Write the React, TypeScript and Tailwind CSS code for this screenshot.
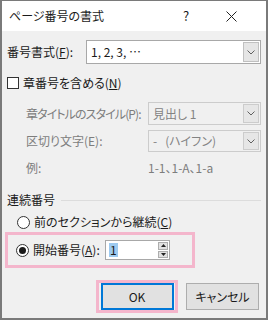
import type { ReactNode } from "react";

const FONT = "font-['Yu_Gothic_UI','Meiryo_UI','Noto_Sans_CJK_JP',sans-serif] [font-feature-settings:'palt']";

function Chevron() {
  return (
    <svg width="8" height="5" viewBox="0 0 8 5" fill="none" stroke="#606060" strokeWidth="1">
      <path d="M0.5 0.5 L4 4 L7.5 0.5" />
    </svg>
  );
}

function Combo({ value, disabled, className }: { value: ReactNode; disabled?: boolean; className?: string }) {
  return (
    <div
      className={`flex h-full items-stretch border ${disabled ? "border-[#cccccc] bg-[#f0f0f0] text-[#838383]" : "border-[#a8a8a8] bg-white text-[#1a1a1a]"} ${className ?? ""}`}
    >
      <div className="flex flex-1 items-center whitespace-nowrap pl-[4px] text-[12px]">{value}</div>
      <div className={`m-px flex w-[16px] items-center justify-center border ${disabled ? "border-[#cccccc] bg-[#e6e6e6]" : "border-[#c0c0c0] bg-[#e5e5e5]"}`}>
        <Chevron />
      </div>
    </div>
  );
}

function Radio({ checked }: { checked?: boolean }) {
  return (
    <span className="flex h-[13px] w-[13px] shrink-0 items-center justify-center rounded-full border border-[#333333] bg-white">
      {checked ? <span className="h-[7px] w-[7px] rounded-full bg-[#1a1a1a]" /> : null}
    </span>
  );
}

export default function App() {
  return (
    <div className={`${FONT} flex h-[320px] w-[268px] flex-col border-x-2 border-b-2 border-t border-[#7a7a7a] bg-[#f0f0f0] text-[12px] text-[#1a1a1a]`}>
      <div className="flex h-[30px] items-center bg-white pl-[7px]">
        <span className="flex-1 text-[12px]">ページ番号の書式</span>
        <span className="w-[20px] text-center text-[13px]">?</span>
        <span className="flex w-[70px] items-center justify-center">
          <svg width="11" height="11" viewBox="0 0 11 11" stroke="#222" strokeWidth="1">
            <path d="M0.5 0.5 L10.5 10.5 M10.5 0.5 L0.5 10.5" />
          </svg>
        </span>
      </div>

      <div className="flex flex-col px-[5px] whitespace-nowrap">
        <div className="mt-[9px] flex h-[24px] items-center">
          <span className="w-[79px] shrink-0">
            番号書式(<span className="underline">F</span>):
          </span>
          <Combo value="1, 2, 3, …" className="flex-1" />
        </div>

        <div className="mt-[7px] flex h-[24px] items-center gap-[4px]">
          <span className="h-[12px] w-[12px] border border-[#333333] bg-white" />
          <span>
            章番号を含める(<span className="underline">N</span>)
          </span>
        </div>

        <div className="mt-[7px] flex h-[23px] items-center">
          <span className="w-[141px] shrink-0 overflow-hidden pl-[19px] tracking-[-0.9px] text-[#7d7d7d]">章タイトルのスタイル(P):</span>
          <Combo value="見出し 1" disabled className="flex-1" />
        </div>

        <div className="mt-[5px] flex h-[22px] items-center">
          <span className="w-[141px] shrink-0 pl-[19px] text-[#7d7d7d]">区切り文字(E):</span>
          <Combo value={<span>-&nbsp;&nbsp;&nbsp;(ハイフン)</span>} disabled className="flex-1" />
        </div>

        <div className="mt-[6px] flex h-[20px] items-center text-[#7d7d7d]">
          <span className="w-[141px] shrink-0 pl-[19px]">例:</span>
          <span>1-1、1-A、1-a</span>
        </div>

        <div className="mt-[12px] flex h-[20px] items-center gap-[6px]">
          <span>連続番号</span>
          <span className="h-px flex-1 bg-[#dcdcdc]" />
        </div>

        <div className="mt-[2px] flex h-[20px] items-center gap-[4px] pl-[10px]">
          <Radio />
          <span>
            前のセクションから継続(<span className="underline">C</span>)
          </span>
        </div>

        <div className="-ml-[2px] flex h-[36px] w-[190px] items-center border-[3px] border-[#f4b6cc] pl-[8px]">
          <Radio checked />
          <span className="ml-[4px] w-[72px]">
            開始番号(<span className="underline">A</span>):
          </span>
          <div className="flex h-[20px] w-[65px] items-stretch border border-[#a8a8a8] bg-white">
            <div className="flex flex-1 items-center pl-[3px]">
              <span className="bg-[#9dcaf0] px-px leading-[14px]">1</span>
            </div>
            <div className="flex w-[12px] flex-col gap-px p-px">
              <span className="flex flex-1 items-center justify-center border border-[#adadad] bg-[#e1e1e1]">
                <svg width="5" height="3" viewBox="0 0 5 3"><path d="M2.5 0 L5 3 L0 3 Z" fill="#222" /></svg>
              </span>
              <span className="flex flex-1 items-center justify-center border border-[#adadad] bg-[#e1e1e1]">
                <svg width="5" height="3" viewBox="0 0 5 3"><path d="M0 0 L5 0 L2.5 3 Z" fill="#222" /></svg>
              </span>
            </div>
          </div>
        </div>

        <div className="mt-[12px] flex h-[33px] items-center">
          <div className="ml-[89px] flex h-[33px] w-[82px] items-center justify-center border-[3px] border-[#f4b6cc]">
            <button className="flex h-[27px] w-[73px] items-center justify-center border-2 border-[#0078d7] bg-[#e1e1e1] text-[12px]">OK</button>
          </div>
          <button className="ml-[8px] flex h-[27px] w-[73px] items-center justify-center border border-[#adadad] bg-[#e1e1e1] text-[12px]">キャンセル</button>
        </div>
      </div>
    </div>
  );
}
